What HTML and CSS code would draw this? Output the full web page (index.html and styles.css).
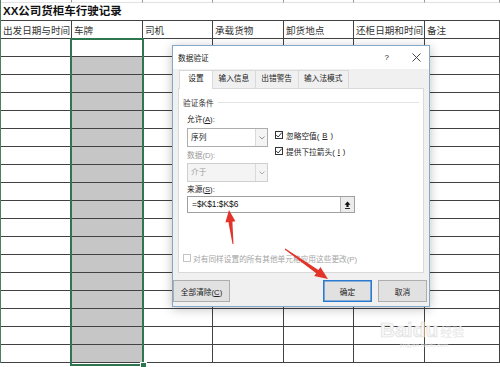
FILE: index.html
```html
<!DOCTYPE html>
<html lang="zh-CN">
<head>
    <meta charset="UTF-8">
    <meta name="viewport" content="width=device-width, initial-scale=1.0">
    <title>XX公司货柜车行驶记录</title>
    <link rel="stylesheet" href="styles.css">
</head>
<body>
    <div class="sheet" id="sheet">
        <div class="cell strip"></div><div class="cell strip"></div><div class="cell strip"></div><div class="cell strip"></div><div class="cell strip"></div><div class="cell strip"></div><div class="cell strip"></div>
        <div class="cell title">XX公司货柜车行驶记录</div>
        <div class="cell head">出发日期与时间</div>
        <div class="cell head">车牌</div>
        <div class="cell head">司机</div>
        <div class="cell head">承载货物</div>
        <div class="cell head">卸货地点</div>
        <div class="cell head">还柜日期和时间</div>
        <div class="cell head">备注</div>
    </div>
    <div class="selection"></div>
    <div class="handle"></div>

    <div class="watermark">
        <span class="wm-logo">Baidu</span><span class="wm-cn">经验</span>
        <div class="wm-url">jingyan.baidu.com</div>
    </div>

    <div class="dialog">
        <div class="titlebar">
            <span class="title">数据验证</span>
            <span class="help">?</span>
            <svg class="close" width="9" height="9" viewBox="0 0 9 9"><path d="M0.5 0.5 L8.5 8.5 M8.5 0.5 L0.5 8.5" stroke="#333" stroke-width="0.9" fill="none"/></svg>
        </div>
        <div class="dlg-body">
            <div class="tabs">
                <div class="tab active">设置</div>
                <div class="tab">输入信息</div>
                <div class="tab">出错警告</div>
                <div class="tab">输入法模式</div>
            </div>
            <div class="panel">
                <div class="group-head"><span>验证条件</span><span class="rule"></span></div>
                <div class="criteria">
                    <div class="left-col">
                        <div class="lbl">允许(<u>A</u>):</div>
                        <div class="combo">
                            <span class="combo-text">序列</span>
                            <span class="drop"><svg width="6" height="4" viewBox="0 0 6 4"><path d="M0.5 0.5 L3 3 L5.5 0.5" stroke="#777" stroke-width="0.8" fill="none"/></svg></span>
                        </div>
                        <div class="lbl disabled second">数据(D):</div>
                        <div class="combo off">
                            <span class="combo-text">介于</span>
                            <span class="drop"><svg width="6" height="4" viewBox="0 0 6 4"><path d="M0.5 0.5 L3 3 L5.5 0.5" stroke="#999" stroke-width="0.8" fill="none"/></svg></span>
                        </div>
                    </div>
                    <div class="right-col">
                        <div class="chk"><span class="box"><svg width="8" height="8" viewBox="0 0 8 8"><path d="M1.2 4 L3.2 6 L6.8 1.6" stroke="#222" stroke-width="0.9" fill="none"/></svg></span>忽略空值(<u>B</u>)</div>
                        <div class="chk"><span class="box"><svg width="8" height="8" viewBox="0 0 8 8"><path d="M1.2 4 L3.2 6 L6.8 1.6" stroke="#222" stroke-width="0.9" fill="none"/></svg></span>提供下拉箭头(<u>I</u>)</div>
                    </div>
                </div>
                <div class="lbl src-lbl">来源(<u>S</u>):</div>
                <div class="source">
                    <span class="src-val">=$K$1:$K$6</span>
                    <span class="pick"><svg width="7" height="8" viewBox="0 0 7 8"><path d="M3.5 0.5 L6.5 3.8 H4.6 V6 H2.4 V3.8 H0.5 Z" fill="#111"/><path d="M1 7.5 H6" stroke="#111" stroke-width="0.9"/></svg></span>
                </div>
                <div class="chk apply"><span class="box"></span>对有同样设置的所有其他单元格应用这些更改(P)</div>
            </div>
            <div class="buttons">
                <button class="btn clear">全部清除(<u>C</u>)</button>
                <span class="spacer"></span>
                <button class="btn primary">确定</button>
                <button class="btn">取消</button>
            </div>
        </div>
    </div>

    <svg class="marks" width="500" height="367" viewBox="0 0 500 367">
        <polygon points="233.5,243.9 232.4,221.7 235.4,221.3 229,210 225.4,222.5 228.4,222.1 232.5,244.1" fill="#e3342b"/>
        <polygon points="285.3,248.6 318.4,270 320.4,267.1 328,279 314.2,276.1 316.2,273.2 284.7,249.4" fill="#e3342b"/>
    </svg>

    <script>
        // empty rows of the sheet; column B is selected (grey) below the active cell
        var sheet = document.getElementById("sheet");
        for (var r = 0; r < 18; r++) {
            for (var c = 0; c < 7; c++) {
                var cell = document.createElement("div");
                cell.className = "cell";
                if (c == 1 && r > 0) cell.className += " sel";
                sheet.appendChild(cell);
            }
        }
    </script>
</body>
</html>
```

FILE: styles.css
```css
body {
    margin: 0;
    width: 500px;
    height: 367px;
    overflow: hidden;
    position: relative;
    background: #fff;
    font-family: "Liberation Sans", "Noto Sans CJK SC", sans-serif;
    color: #222;
}

/* spreadsheet */
.sheet {
    display: grid;
    grid-template-columns: 71px 71px 70px 71px 70px 71px 75px;
    grid-template-rows: 3px 18px;
    grid-auto-rows: 18px;
    border-left: 1px solid #4f7d62;
}
.cell {
    box-sizing: border-box;
    border-right: 1px solid #424242;
    border-bottom: 1px solid #424242;
    overflow: hidden;
    white-space: nowrap;
}
.cell.strip {
    border-right: 1px solid #9a9a9a;
    border-bottom: 1px solid #e2e2e2;
}
.cell.title {
    grid-column: 1 / -1;
    border-right: none;
    font-size: 11.5px;
    font-weight: bold;
    line-height: 17px;
    padding-left: 2px;
    color: #111;
}
.cell.head {
    font-size: 9.6px;
    display: flex;
    align-items: flex-end;
    padding: 0 0 1px 2px;
    color: #333;
}
.cell.sel {
    background: #c6c6c6;
}
.selection {
    position: absolute;
    left: 70px;
    top: 38px;
    width: 74px;
    height: 328px;
    box-sizing: border-box;
    border: 2px solid #2f7550;
}
.handle {
    position: absolute;
    left: 140px;
    top: 362px;
    width: 5px;
    height: 5px;
    background: #2f7550;
    border: 1px solid #fff;
}

/* watermark */
.watermark {
    position: absolute;
    left: 380px;
    top: 318px;
    pointer-events: none;
}
.wm-logo {
    font-size: 21px;
    font-weight: bold;
    color: #f7f7f7;
    -webkit-text-stroke: 0.6px #dadada;
}
.wm-cn {
    font-size: 12px;
    font-weight: bold;
    color: #ececec;
    margin-left: 2px;
}
.wm-url {
    font-size: 6px;
    color: #e6e6e6;
    margin: 0 0 0 20px;
}

/* dialog */
.dialog {
    position: absolute;
    left: 172px;
    top: 45px;
    width: 258px;
    height: 262px;
    box-sizing: border-box;
    border: 1px solid #86a7cc;
    background: #f0f0f0;
    box-shadow: 0 2px 10px rgba(0, 0, 0, 0.25);
    font-size: 7.7px;
}
.titlebar {
    height: 23px;
    background: #fff;
    display: flex;
    align-items: center;
    padding-left: 5px;
}
.title {
    flex: 1;
}
.help {
    font-size: 8px;
    margin-right: 23px;
}
.close {
    margin-right: 8px;
}
.dlg-body {
    padding: 1px 5px 0;
}
.tabs {
    display: flex;
    height: 18px;
    padding-left: 2px;
}
.tab {
    box-sizing: border-box;
    height: 18px;
    line-height: 16px;
    padding: 0 5.5px;
    border: 1px solid #d9d9d9;
    border-bottom: none;
    margin-left: -1px;
    background: #f0f0f0;
}
.tab.active {
    background: #fff;
    padding: 0 8.3px;
    height: 19px;
    position: relative;
    z-index: 1;
}
.panel {
    box-sizing: border-box;
    height: 185px;
    background: #fff;
    border: 1px solid #d9d9d9;
    padding: 6px 4px 0;
}
.group-head {
    display: flex;
    align-items: center;
    height: 14px;
    color: #333;
}
.rule {
    flex: 1;
    height: 1px;
    background: #e3e3e3;
    margin-left: 4px;
}
.criteria {
    display: flex;
    gap: 7px;
    margin: 4px 0 0 4px;
}
.left-col {
    width: 81px;
}
.lbl {
    height: 14px;
    line-height: 14px;
}
.lbl.disabled {
    color: #9a9a9a;
}
.lbl.second {
    margin-top: 2px;
}
.combo {
    box-sizing: border-box;
    height: 19px;
    margin-top: 1px;
    border: 1px solid #adadad;
    background: #fff;
    display: flex;
}
.combo-text {
    flex: 1;
    padding-left: 3px;
    line-height: 17px;
}
.drop {
    width: 11px;
    border-left: 1px solid #dadada;
    background: #f4f4f4;
    display: flex;
    align-items: center;
    justify-content: center;
}
.combo.off {
    margin-top: 0;
    border-color: #cfcfcf;
    background: #f4f4f4;
    color: #a0a0a0;
}
.right-col {
    padding-top: 14px;
}
.chk {
    display: flex;
    align-items: center;
    gap: 3px;
    height: 16px;
}
.box {
    box-sizing: border-box;
    width: 8px;
    height: 8px;
    border: 1px solid #333;
    background: #fff;
    display: flex;
    align-items: center;
    justify-content: center;
}
.box svg {
    flex: none;
}
.src-lbl {
    margin: 2px 0 0 4px;
    height: 12px;
    line-height: 12px;
}
.source {
    box-sizing: border-box;
    width: 168px;
    height: 17px;
    margin-left: 4px;
    border: 1px solid #a0a0a0;
    display: flex;
}
.src-val {
    flex: 1;
    font-size: 8.4px;
    line-height: 15px;
    padding-left: 4px;
    color: #111;
}
.pick {
    width: 13px;
    border-left: 1px solid #b5b5b5;
    background: #ececec;
    display: flex;
    align-items: center;
    justify-content: center;
}
.chk.apply {
    margin-top: 38px;
    height: 14px;
    gap: 2px;
    color: #a4a4a4;
}
.chk.apply .box {
    border-color: #c4c4c4;
}
.buttons {
    display: flex;
    gap: 6px;
    margin: 7px -5px 0;
    padding-right: 2px;
}
.spacer {
    flex: 1;
}
.btn {
    box-sizing: border-box;
    height: 22px;
    width: 49px;
    padding: 0;
    border: 1px solid #adadad;
    background: #e1e1e1;
    font-family: "Liberation Sans", "Noto Sans CJK SC", sans-serif;
    font-size: 7.7px;
    color: #222;
}
.btn.clear {
    width: 57px;
}
.btn.primary {
    border: 1px solid #2a7ad0;
    box-shadow: inset 0 0 0 0.6px #2a7ad0;
}

.marks {
    position: absolute;
    left: 0;
    top: 0;
    pointer-events: none;
}
```
